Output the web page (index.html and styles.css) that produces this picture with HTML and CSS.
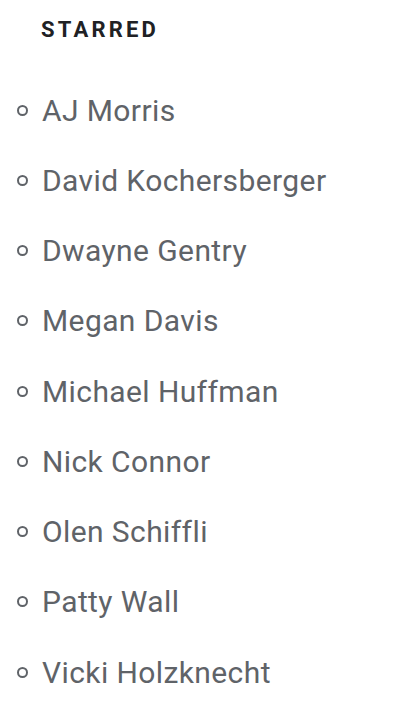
FILE: index.html
```html
<!DOCTYPE html>
<html lang="en">
<head>
  <meta charset="UTF-8">
  <meta name="viewport" content="width=device-width, initial-scale=1.0">
  <title>Starred</title>
  <link rel="stylesheet" href="styles.css">
</head>
<body>

<section class="starred">
  <h2>Starred</h2>
  <ul class="people">
    <li><span class="dot"></span>AJ Morris</li>
    <li><span class="dot"></span>David Kochersberger</li>
    <li><span class="dot"></span>Dwayne Gentry</li>
    <li><span class="dot"></span>Megan Davis</li>
    <li><span class="dot"></span>Michael Huffman</li>
    <li><span class="dot"></span>Nick Connor</li>
    <li><span class="dot"></span>Olen Schiffli</li>
    <li><span class="dot"></span>Patty Wall</li>
    <li><span class="dot"></span>Vicki Holzknecht</li>
  </ul>
</section>

</body>
</html>
```

FILE: styles.css
```css
body { font-family: Roboto, "Liberation Sans", sans-serif; margin: 0; padding: 0; background: #fff; }
.starred { padding: 15px 0 0 17px; }
.starred h2 { margin: 0 0 0 24px; font-size: 22px; font-weight: 700; letter-spacing: 3.2px; text-transform: uppercase; color: #202124; line-height: 30px; }
.people { list-style: none; margin: 30px 0 0; padding: 0; }
.people li { display: flex; align-items: center; height: 70.25px; font-size: 30px; letter-spacing: 0.4px; color: #5f6368; }
.dot { width: 7px; height: 7px; border: 2.5px solid #5f6368; border-radius: 50%; margin-right: 14px; flex: none; }
```
